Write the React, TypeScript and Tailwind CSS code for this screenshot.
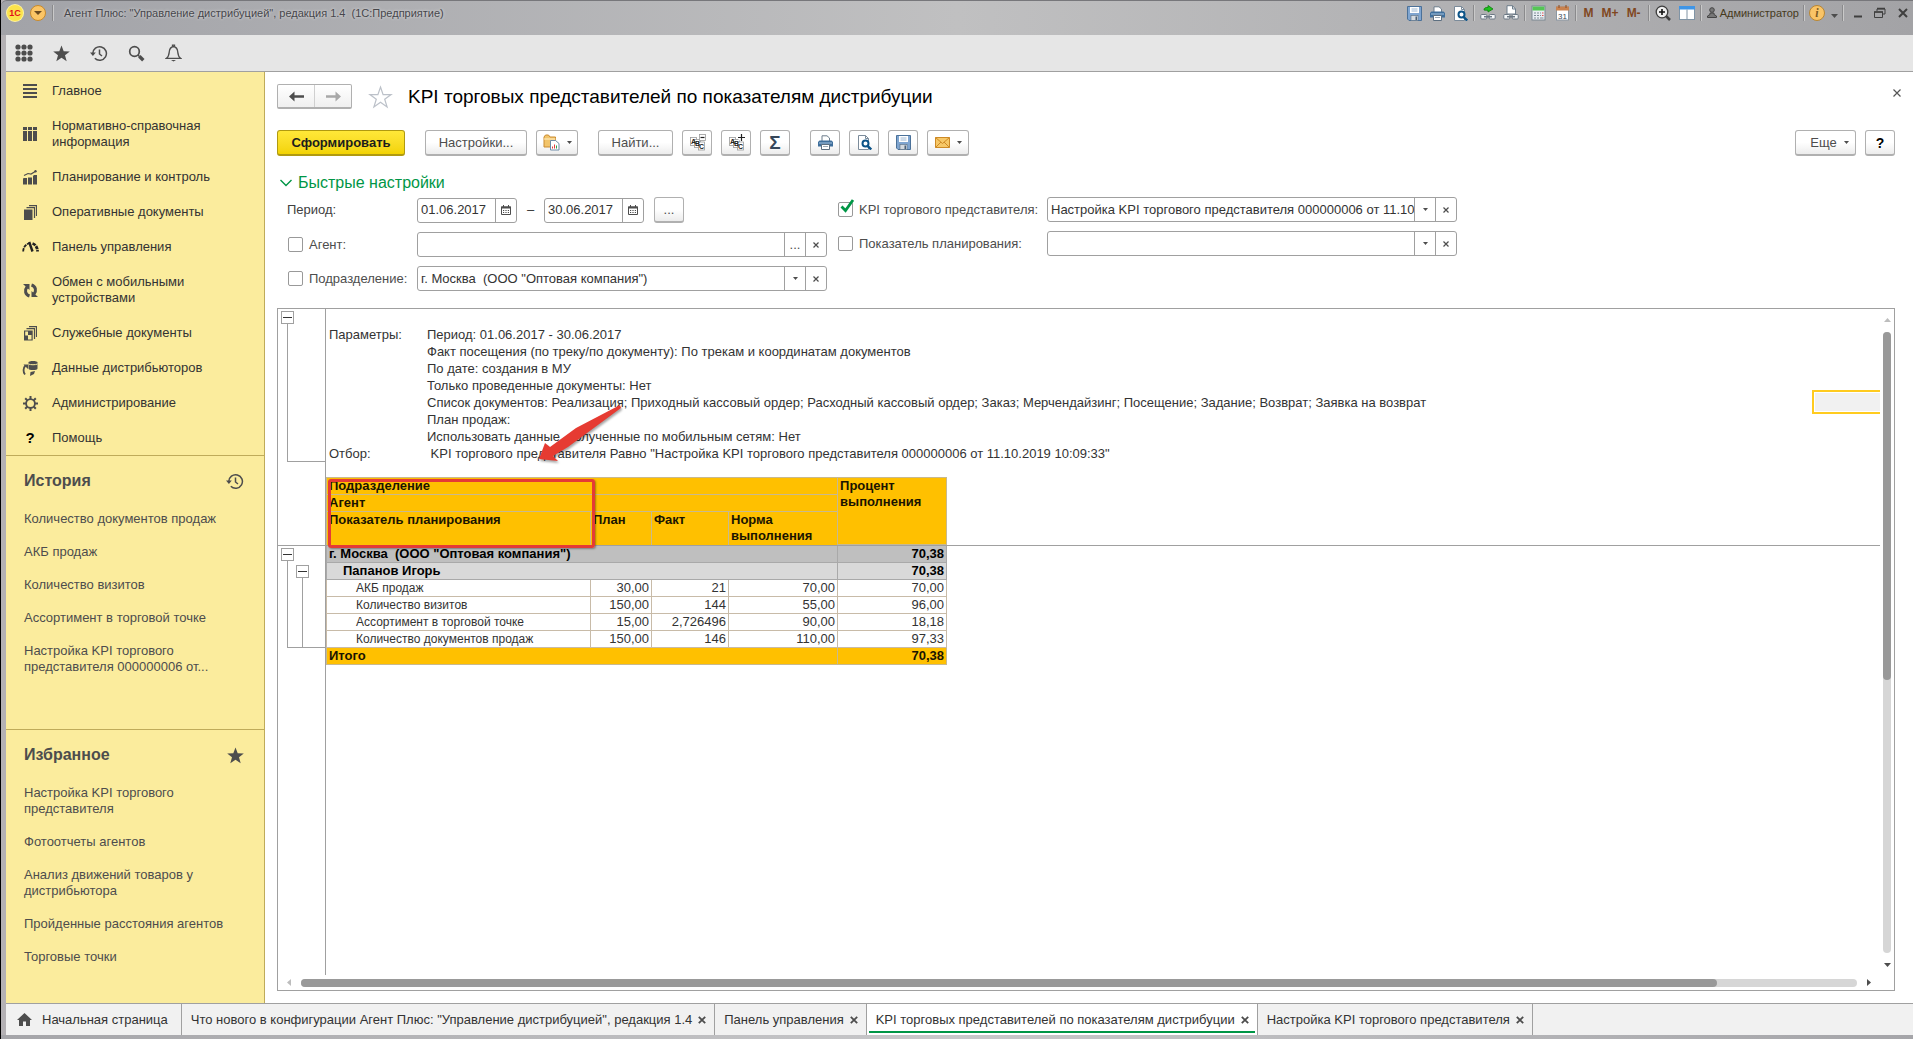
import { ReactNode } from "react";
import clsx from "clsx";

interface IconProps {
  className?: string;
}

const navItems = [
  { name: "Главное", icon: <LinesIcon /> },
  { name: "Нормативно-справочная информация", icon: <ColumnsIcon /> },
  { name: "Планирование и контроль", icon: <ChartIcon /> },
  { name: "Оперативные документы", icon: <DocsIcon /> },
  { name: "Панель управления", icon: <GaugeIcon /> },
  { name: "Обмен с мобильными устройствами", icon: <SyncIcon /> },
  { name: "Служебные документы", icon: <ServiceDocsIcon /> },
  { name: "Данные дистрибьюторов", icon: <DataIcon /> },
  { name: "Администрирование", icon: <GearIcon /> },
  { name: "Помощь", icon: <span className="text-[15px] font-bold text-black">?</span> },
];

const historyItems = [
  "Количество документов продаж",
  "АКБ продаж",
  "Количество визитов",
  "Ассортимент в торговой точке",
  "Настройка KPI торгового представителя 000000006 от...",
];

const favoriteItems = [
  "Настройка KPI торгового представителя",
  "Фотоотчеты агентов",
  "Анализ движений товаров у дистрибьютора",
  "Пройденные расстояния агентов",
  "Торговые точки",
];

const params = [
  ["Параметры:", "Период: 01.06.2017 - 30.06.2017"],
  ["", "Факт посещения (по треку/по документу): По трекам и координатам документов"],
  ["", "По дате: создания в МУ"],
  ["", "Только проведенные документы: Нет"],
  [
    "",
    "Список документов: Реализация; Приходный кассовый ордер; Расходный кассовый ордер; Заказ; Мерчендайзинг; Посещение; Задание; Возврат; Заявка на возврат",
  ],
  ["", "План продаж:"],
  ["", "Использовать данные, полученные по мобильным сетям: Нет"],
  [
    "Отбор:",
    ' KPI торгового представителя Равно "Настройка KPI торгового представителя 000000006 от 11.10.2019 10:09:33"',
  ],
];

const rows = [
  ["АКБ продаж", "30,00", "21", "70,00", "70,00"],
  ["Количество визитов", "150,00", "144", "55,00", "96,00"],
  ["Ассортимент в торговой точке", "15,00", "2,726496", "90,00", "18,18"],
  ["Количество документов продаж", "150,00", "146", "110,00", "97,33"],
];

const tabs = [
  { name: 'Что нового в конфигурации Агент Плюс: "Управление дистрибуцией", редакция 1.4' },
  { name: "Панель управления" },
  { name: "KPI торговых представителей по показателям дистрибуции", active: true },
  { name: "Настройка KPI торгового представителя" },
];

export default function App() {
  return (
    <div className="flex h-screen flex-col overflow-hidden border-l border-black bg-[#b4b1b4] font-['Liberation_Sans',Arial,sans-serif] text-[13px] leading-4 text-[#333]">
      <TitleBar />
      <div className="ml-[5px] flex min-h-0 flex-1 flex-col">
        <div className="flex h-[37px] shrink-0 items-center gap-5 border-b border-[#a0a0a0] bg-[#e6e6e6] pl-[9px] text-[#4d4d4d]">
          <button aria-label="Меню функций">
            <svg width="18" height="18" viewBox="0 0 18 18" fill="currentColor">
              {[3, 9, 15].map((y) =>
                [3, 9, 15].map((x) => <circle key={`${x}-${y}`} cx={x} cy={y} r="2.6" />)
              )}
            </svg>
          </button>
          <button aria-label="Избранное">
            <StarIcon className="h-[17px] w-[17px]" />
          </button>
          <button aria-label="История">
            <HistoryIcon />
          </button>
          <button aria-label="Поиск">
            <svg width="17" height="17" viewBox="0 0 17 17" fill="none" stroke="currentColor">
              <circle cx="6.5" cy="6.5" r="4.8" strokeWidth="1.7" />
              <path d="M10 10l1.5 1.5" strokeWidth="1.5" />
              <path d="M11.3 11.3l4 4" strokeWidth="3.4" />
            </svg>
          </button>
          <button aria-label="Оповещения">
            <svg width="17" height="18" viewBox="0 0 17 18" fill="none" stroke="currentColor" strokeWidth="1.3">
              <path d="M1.5 14.3C4 12.5 4 10.5 4.3 7.5C4.6 4.7 6 3 8.5 2.5C11 3 12.4 4.7 12.7 7.5C13 10.5 13 12.5 15.5 14.3Z" />
              <path d="M7.5 2.5V1.2h2v1.3" />
              <path d="M6 16h5l-2.5 1.5z" fill="currentColor" stroke="none" />
            </svg>
          </button>
        </div>
        <div className="flex min-h-0 flex-1">
          <Sidebar />
          <Main />
        </div>
        <TabBar />
      </div>
      <div className="h-1 shrink-0 bg-linear-to-r from-[#a5a5a9] via-[#c8c8ca] to-[#a5a5a9]" />
    </div>
  );
}

function TitleBar() {
  return (
    <header className="h-[35px] shrink-0 rounded-tl-md border-t border-[#77777b] bg-linear-to-r from-[#a2a3a8] via-[#c0c0c1] to-[#a3a3a6]">
      <div className="flex h-6 items-center pl-1.5">
        <span className="flex h-4 w-4 items-center justify-center rounded-full bg-[#fbe34b] text-[9px] font-bold text-[#e2101a] ring-1 ring-[#fff3a0]">
          1С
        </span>
        <button
          aria-label="Главное меню"
          className="ml-[7px] flex h-4 w-4 items-center justify-center rounded-full border border-[#c98a2b] bg-[#fbc566] text-[#6b4a20]"
        >
          <svg width="8" height="4" viewBox="0 0 8 4" fill="currentColor"><path d="M0 0h8L4 4z" /></svg>
        </button>
        <Separator className="ml-1.5" />
        <span className="ml-2.5 flex-1 text-[11px] whitespace-pre text-[#46464b] [text-shadow:0_0_3px_#e8e8e8]">
          {'Агент Плюс: "Управление дистрибуцией", редакция 1.4  (1С:Предприятие)'}
        </span>
        <div className="flex items-center gap-2">
          <TitleButton label="Сохранить"><SaveIcon /></TitleButton>
          <TitleButton label="Печать"><PrinterIcon /></TitleButton>
          <TitleButton label="Просмотр"><PreviewIcon /></TitleButton>
        </div>
        <Separator className="mx-[5px]" />
        <div className="flex items-center gap-[7px]">
          <TitleButton label="Получить ссылку">
            <svg width="16" height="16" viewBox="0 0 16 16" fill="none">
              <path d="M4 5c0-2 1-2.500 4-2.500V.500l5 3.500-5 3V5.300c-2 0-3 0-4-.3z" fill="#1fc31f" stroke="#0b7d0b" strokeWidth=".8" />
              <LinkShape />
            </svg>
          </TitleButton>
          <TitleButton label="Перейти по ссылке">
            <svg width="16" height="16" viewBox="0 0 16 16" fill="none">
              <path d="M4 9V.7h5.500L12.500 4v5z" fill="#fff" stroke="#6d7d8b" />
              <path d="M9.500.7V4h3" stroke="#6d7d8b" />
              <LinkShape />
            </svg>
          </TitleButton>
        </div>
        <Separator className="mx-[5px]" />
        <div className="flex items-center gap-2">
          <TitleButton label="Калькулятор">
            <svg width="16" height="16" viewBox="0 0 16 16">
              <rect x="1" y="1" width="13" height="14" fill="#e8eef2" stroke="#7a8792" />
              <rect x="1.5" y="1.5" width="12" height="4" fill="#55c555" />
              <path d="M3 8h2M6 8h2M9 8h1M3 10.500h2M6 10.500h2M9 10.500h1M3 13h2M6 13h2" stroke="#7e8b96" />
              <path d="M11 8h1.500M11 10.500h1.500" stroke="#e34b4b" />
              <path d="M9 13h3.500" stroke="#7e8b96" />
            </svg>
          </TitleButton>
          <TitleButton label="Календарь">
            <svg width="16" height="16" viewBox="0 0 16 16">
              <rect x="1.5" y="2" width="12" height="13" fill="#fff" stroke="#8b97a3" />
              <rect x="1" y="1.5" width="13" height="4" fill="#c9824f" />
              <path d="M4 0v3M11 0v3" stroke="#8a4b20" />
              <text x="7.5" y="13.5" fontSize="8" textAnchor="middle" fill="#3c4a57">31</text>
            </svg>
          </TitleButton>
        </div>
        <Separator className="mr-[5px] ml-1" />
        <div className="flex gap-2 px-0.5 text-[12px] font-bold text-[#80471f]">
          <button>M</button>
          <button>M+</button>
          <button>M-</button>
        </div>
        <Separator className="mx-[5px]" />
        <div className="flex items-center gap-2">
          <TitleButton label="Масштаб">
            <svg width="16" height="16" viewBox="0 0 16 16" fill="none" stroke="#3e3e3e">
              <circle cx="7" cy="7" r="5.8" fill="#efefef" strokeWidth="1.3" />
              <path d="M4 7h6M7 4v6" stroke="#111" strokeWidth="1.6" />
              <path d="M11 11l4 4" strokeWidth="2.5" />
            </svg>
          </TitleButton>
          <TitleButton label="Панели">
            <svg width="16" height="16" viewBox="0 0 16 16">
              <rect x=".5" y="1.5" width="15" height="13" fill="#fff" stroke="#8094a5" />
              <rect x="0" y="1" width="16" height="3.5" fill="#3f95e6" />
              <path d="M8 4.500v10" stroke="#8094a5" />
            </svg>
          </TitleButton>
        </div>
        <Separator className="mx-[5px]" />
        <button className="flex items-center gap-[3px] text-[11px] text-[#463a1c]">
          <svg width="10" height="12" viewBox="0 0 10 12" fill="#777" stroke="#444">
            <circle cx="5" cy="3" r="2.3" />
            <path d="M.5 10.500V9L3 7.500V6h4v1.500L9.500 9v1.500z" />
          </svg>
          Администратор
        </button>
        <Separator className="mx-1" />
        <button className="flex items-center gap-1.5" aria-label="О программе">
          <span className="flex h-4 w-4 items-center justify-center rounded-full border border-[#b98632] bg-[#f9c467] font-['Liberation_Serif',serif] text-[12px] font-bold italic text-[#7b5a24]">
            i
          </span>
          <span className="pt-1.5 text-[#4d4d4d]">
            <svg width="7" height="4" viewBox="0 0 7 4" fill="currentColor"><path d="M0 0h7L3.500 4z" /></svg>
          </span>
        </button>
        <Separator className="mx-1" />
        <div className="flex items-center gap-3 pr-[5px] pl-1.5 text-[#3f3f3f]">
          <TitleButton label="Свернуть">
            <svg width="8" height="12" viewBox="0 0 8 12"><path d="M0 9.500h8" stroke="currentColor" strokeWidth="2" /></svg>
          </TitleButton>
          <TitleButton label="Развернуть">
            <svg width="12" height="12" viewBox="0 0 12 12" fill="none" stroke="currentColor">
              <path d="M3 4V2h8v5H9" />
              <path d="M.500 5h8v5.500h-8z" />
              <path d="M0 5h9M3 1.500h8" strokeWidth="1.5" />
            </svg>
          </TitleButton>
          <TitleButton label="Закрыть">
            <svg width="10" height="10" viewBox="0 0 10 10"><path d="M1 1l8 8M9 1L1 9" stroke="currentColor" strokeWidth="2" /></svg>
          </TitleButton>
        </div>
      </div>
    </header>
  );
}

function TitleButton({ label, children }: { label: string; children: ReactNode }) {
  return <button aria-label={label}>{children}</button>;
}

function Separator({ className }: IconProps) {
  return <span className={clsx("box-content h-4 w-px border-r border-[#c9c9c9] bg-[#8a8a8c]", className)} />;
}

function Sidebar() {
  return (
    <aside className="flex w-[259px] shrink-0 flex-col border-r border-[#bfab5a] bg-[#fbec9d]">
      <nav className="pt-px">
        {navItems.map((d) => (
          <a key={d.name} href="#" className="flex items-center gap-[14px] pt-[10px] pr-12 pb-[9px] pl-4">
            <span className="flex h-4 w-4 shrink-0 items-center justify-center text-[#4d4d4d]">{d.icon}</span>
            {d.name}
          </a>
        ))}
      </nav>
      <SideSection title="История" icon={<HistoryIcon />} items={historyItems} />
      <SideSection title="Избранное" icon={<StarIcon className="h-[17px] w-[17px]" />} items={favoriteItems} />
    </aside>
  );
}

interface SectionProps {
  title: string;
  icon: ReactNode;
  items: string[];
}

function SideSection({ title, icon, items }: SectionProps) {
  return (
    <section className="flex-1 basis-0 border-t border-[#bfab5a] pr-5 pl-[18px] text-[#4d4d4d]">
      <div className="flex items-center justify-between pt-[15px]">
        <h2 className="text-[16px] leading-5 font-bold">{title}</h2>
        <span>{icon}</span>
      </div>
      <ul className="mt-5 flex flex-col gap-[17px] pr-5">
        {items.map((d) => (
          <li key={d}>
            <a href="#" className="block">{d}</a>
          </li>
        ))}
      </ul>
    </section>
  );
}

function Main() {
  return (
    <main className="flex min-w-0 flex-1 flex-col bg-white pr-[18px] pb-3 pl-3">
      <div className="flex items-center pt-3">
        <div className="flex h-[25px] overflow-hidden rounded-xs border border-b-2 border-[#b0b0b0] bg-linear-to-b from-white to-[#f0f0f0]">
          <button aria-label="Назад" className="flex w-9 items-center justify-center text-[#4d4d4d]">
            <ArrowIcon />
          </button>
          <button aria-label="Вперед" className="flex w-[37px] items-center justify-center border-l border-[#d0d0d0] text-[#a8a8a8]">
            <ArrowIcon className="rotate-180" />
          </button>
        </div>
        <button aria-label="В избранное" className="ml-4">
          <svg width="25" height="24" viewBox="0 0 25 24" fill="none" stroke="#bcc1c9" strokeWidth="1.2">
            <path d="M12.500 2l2.600 7.600h8l-6.400 4.700 2.400 7.700-6.600-4.700L5.900 22l2.400-7.700L1.900 9.600h8z" />
          </svg>
        </button>
        <h1 className="ml-[15px] flex-1 text-[19px] leading-6 text-black">
          KPI торговых представителей по показателям дистрибуции
        </h1>
        <button aria-label="Закрыть" className="-mr-1.5 mb-2">
          <svg width="8" height="8" viewBox="0 0 8 8"><path d="M.5.5l7 7M7.500.500l-7 7" stroke="#555" strokeWidth="1.2" /></svg>
        </button>
      </div>

      <div className="mt-[21px] flex gap-[9px]">
        <button className="mr-[11px] h-[26px] w-32 rounded-[3px] border border-b-2 border-[#b09a10] bg-linear-to-b from-[#ffe838] to-[#f3d300] font-bold text-[#1c1c1c]">
          Сформировать
        </button>
        <ToolButton className="w-[102px]">Настройки...</ToolButton>
        <ToolButton className="mr-[11px] w-[42px]" label="Варианты отчета">
          <svg width="17" height="17" viewBox="0 0 17 17">
            <path d="M1 3l1.500-2h3L7 3h5.500v10H1z" fill="#f2c46a" stroke="#c98b31" />
            <path d="M1 5h11.500" stroke="#fff0c8" />
            <path d="M7.500 6.500h5l3.500 3v6.500H7.500z" fill="#fff" stroke="#6e8ba8" />
            <path d="M9.500 14.500v-2M11.500 14.500v-4" stroke="#e23b3b" />
            <path d="M13.500 14.500v-3" stroke="#2f9f4d" />
          </svg>
          <Caret />
        </ToolButton>
        <ToolButton className="w-[75px]">Найти...</ToolButton>
        <ToolButton className="w-[30px]" label="Свернуть группы"><AbcIcon /></ToolButton>
        <ToolButton className="w-[30px]" label="Развернуть группы"><AbcIcon plus /></ToolButton>
        <ToolButton className="mr-[11px] w-[30px]" label="Сумма">
          <span className="text-[19px] font-bold text-[#36475a]">Σ</span>
        </ToolButton>
        <ToolButton className="w-[30px]" label="Печать"><PrinterIcon /></ToolButton>
        <ToolButton className="w-[30px]" label="Предварительный просмотр"><PreviewIcon /></ToolButton>
        <ToolButton className="w-[30px]" label="Сохранить"><SaveIcon /></ToolButton>
        <ToolButton className="w-[42px]" label="Отправить">
          <svg width="15" height="11" viewBox="0 0 15 11" fill="#f7c868" stroke="#cd8a26">
            <path d="M.500.500h14v10H.500z" />
            <path d="M.500.500l7 6 7-6M.500 10.500L6 5M14.500 10.500L9 5" fill="none" />
          </svg>
          <Caret />
        </ToolButton>
        <ToolButton className="ml-auto w-[61px] pl-2">
          Еще <Caret />
        </ToolButton>
        <ToolButton className="w-[30px] text-[14px] font-bold">
          <span className="text-black">?</span>
        </ToolButton>
      </div>

      <QuickSettings />
      <Report />
    </main>
  );
}

interface ToolProps {
  className?: string;
  label?: string;
  children: ReactNode;
}

function ToolButton({ className, label, children }: ToolProps) {
  return (
    <button
      aria-label={label}
      className={clsx(
        "flex h-[26px] items-center justify-center gap-[7px] rounded-[3px] border border-b-2 border-[#b0b0b0] bg-linear-to-b from-white via-white to-[#ececec] text-[#4d4d4d]",
        className
      )}
    >
      {children}
    </button>
  );
}

function QuickSettings() {
  return (
    <section className="pt-[17px]">
      <button className="flex items-center gap-1.5 pl-[3px] text-[16px] leading-5 text-[#009646]">
        <svg width="12" height="8" viewBox="0 0 12 8" fill="none" stroke="currentColor" strokeWidth="1.4">
          <path d="M.500 1L6 6.500 11.500 1" />
        </svg>
        Быстрые настройки
      </button>
      <div className="mt-1 flex gap-[11px]">
        <div className="flex w-[550px] flex-col gap-[9px]">
          <div className="flex h-[26px] items-center">
            <span className="w-[140px] pl-[10px] text-[#404040]">Период:</span>
            <DateField value="01.06.2017" label="Начало периода" />
            <span className="w-[27px] text-center">–</span>
            <DateField value="30.06.2017" label="Конец периода" />
            <ToolButton className="ml-[10px] w-[30px]" label="Выбрать период">...</ToolButton>
          </div>
          <div className="flex items-center">
            <Check id="agent" label="Агент:" className="w-[140px] pl-[11px]" />
            <Field id="agent" label="Агент" value="" choice="dots" />
          </div>
          <div className="flex items-center">
            <Check id="dept" label="Подразделение:" className="w-[140px] pl-[11px]" />
            <Field id="dept" label="Подразделение" value={'г. Москва  (ООО "Оптовая компания")'} choice="list" />
          </div>
        </div>
        <div className="flex w-[619px] flex-col gap-[9px]">
          <div className="flex items-center">
            <Check id="kpi" label="KPI торгового представителя:" checked className="w-[209px]" />
            <Field
              id="kpi"
              label="KPI торгового представителя"
              value="Настройка KPI торгового представителя 000000006 от 11.10.2019 10:09:33"
              choice="list"
            />
          </div>
          <div className="flex items-center">
            <Check id="plan" label="Показатель планирования:" className="w-[209px]" />
            <Field id="plan" label="Показатель планирования" value="" choice="list" />
          </div>
        </div>
      </div>
    </section>
  );
}

interface CheckProps {
  id: string;
  label: string;
  checked?: boolean;
  className?: string;
}

function Check({ id, label, checked, className }: CheckProps) {
  return (
    <label htmlFor={`${id}-on`} className={clsx("flex shrink-0 items-center gap-1.5 whitespace-nowrap text-[#4d4d4d]", className)}>
      <span className="relative flex">
        <input
          id={`${id}-on`}
          type="checkbox"
          defaultChecked={checked}
          className="peer h-[15px] w-[15px] appearance-none rounded-xs border border-[#999] bg-white"
        />
        <svg
          className="pointer-events-none absolute -top-1 left-0.5 hidden peer-checked:block"
          width="15"
          height="16"
          viewBox="0 0 15 16"
          fill="none"
          stroke="#009646"
          strokeWidth="2.8"
        >
          <path d="M1.500 8.500l4 4L13 2" />
        </svg>
      </span>
      {label}
    </label>
  );
}

interface FieldProps {
  id: string;
  label: string;
  value: string;
  choice: "dots" | "list";
}

function Field({ id, label, value, choice }: FieldProps) {
  return (
    <div className="flex h-[25px] min-w-0 flex-1 overflow-hidden rounded-[3px] border border-[#a0a0a0]">
      <input id={id} aria-label={label} defaultValue={value} className="min-w-0 flex-1 pl-[3px] outline-none" />
      <button aria-label="Выбрать" className="flex w-[21px] items-center justify-center border-l border-[#a0a0a0] text-[#4d4d4d]">
        {choice === "dots" ? "..." : <Caret />}
      </button>
      <button aria-label="Очистить" className="flex w-[21px] items-center justify-center border-l border-[#a0a0a0] text-[#4d4d4d]">
        <svg width="6" height="6" viewBox="0 0 6 6"><path d="M.500.500l5 5M5.500.500l-5 5" stroke="currentColor" strokeWidth="1.2" /></svg>
      </button>
    </div>
  );
}

function DateField({ value, label }: { value: string; label: string }) {
  return (
    <div className="flex h-[25px] w-[100px] overflow-hidden rounded-[3px] border border-[#a0a0a0]">
      <input aria-label={label} defaultValue={value} className="min-w-0 flex-1 pl-[3px] outline-none" />
      <button aria-label="Календарь" className="flex w-[21px] items-center justify-center border-l border-[#a0a0a0] text-[#4d4d4d]">
        <svg width="10" height="10" viewBox="0 0 10 10">
          <path d="M.500 2h9v7.500h-9z" fill="none" stroke="currentColor" />
          <path d="M0 2.500h10" stroke="currentColor" strokeWidth="2" />
          <path d="M2.500 0v2M7.500 0v2" stroke="currentColor" />
          <path d="M2 5.500h1.200M4.400 5.500h1.200M6.800 5.500H8M2 7.500h1.200M4.400 7.500h1.200M6.800 7.500H8" stroke="currentColor" />
        </svg>
      </button>
    </div>
  );
}

function Report() {
  return (
    <section className="mt-[17px] flex min-h-0 flex-1 flex-col border border-[#a0a0a0]">
      <div className="flex min-h-0 flex-1">
        <div className="relative flex min-w-0 flex-1 flex-col overflow-hidden">
          <div className="flex border-b border-[#a0a0a0]">
            <Gutter>
              <div className="flex h-[153px] pt-0.5 pl-[3px]">
                <GroupLine />
              </div>
            </Gutter>
            <div className="min-w-0 flex-1 pt-[17px]">
              <dl className="mb-[15px]">
                {params.map(([name, text]) => (
                  <div key={text} className="flex h-[17px] items-center whitespace-pre">
                    <dt className="w-[101px] shrink-0 pl-[3px]">{name}</dt>
                    <dd>{text}</dd>
                  </div>
                ))}
              </dl>
              <HeadTable />
            </div>
          </div>
          <div className="flex min-h-0 flex-1">
            <Gutter>
              <div className="flex h-[102px] pt-0.5 pl-[3px]">
                <GroupLine>
                  <div className="flex h-full pt-1 pl-2">
                    <GroupLine last />
                  </div>
                </GroupLine>
              </div>
            </Gutter>
            <div className="min-w-0 flex-1">
              <BodyTable />
            </div>
          </div>

          {/* current cell */}
          <div className="absolute top-[81px] right-0 h-6 w-[68px] border-2 border-r-0 border-[#ffcb1f] bg-[#f1f1f1] shadow-[inset_1px_1px_0_#fff,inset_0_-1px_0_#fff]" />
          {/* callout over the header */}
          <div className="absolute top-[170px] left-[50px] h-[69px] w-[267px] rounded-[3px] border-3 border-[#e53a35] shadow-[1px_1px_2px_rgba(0,0,0,0.35)]" />
          <svg
            className="absolute top-[94px] left-[258px] drop-shadow-[1px_2px_1px_rgba(0,0,0,0.35)]"
            width="88"
            height="62"
            viewBox="0 0 88 62"
          >
            <path d="M84 2L40 25 14 44 9 40 3 56 22 58 17 53 32 44 85 5z" fill="#e63b32" />
          </svg>
        </div>

        <div className="flex w-[14px] flex-col items-center gap-[10px] pt-[9px] pb-2">
          <svg width="7" height="4" viewBox="0 0 7 4" fill="#bdbdbd"><path d="M0 4L3.500 0 7 4z" /></svg>
          <div className="w-2 flex-1 rounded-full bg-[#d6d6d6]">
            <div className="h-[56%] rounded-full bg-[#999]" />
          </div>
          <svg width="7" height="4" viewBox="0 0 7 4" fill="#4d4d4d"><path d="M0 0L3.500 4 7 0z" /></svg>
        </div>
      </div>
      <div className="flex h-[15px] items-center gap-[10px] pr-[23px] pl-[9px]">
        <svg width="4" height="7" viewBox="0 0 4 7" fill="#bdbdbd"><path d="M4 0L0 3.500 4 7z" /></svg>
        <div className="h-2 flex-1 rounded-full bg-[#d6d6d6]">
          <div className="h-2 w-[91%] rounded-full bg-[#999]" />
        </div>
        <svg width="4" height="7" viewBox="0 0 4 7" fill="#4d4d4d"><path d="M0 0l4 3.500L0 7z" /></svg>
      </div>
    </section>
  );
}

function Gutter({ children }: { children: ReactNode }) {
  return <div className="w-12 shrink-0 border-r border-[#a0a0a0]">{children}</div>;
}

// nested groups share the bottom line of the outer one
function GroupLine({ last, children }: { last?: boolean; children?: ReactNode }) {
  return (
    <div className="flex flex-1 flex-col">
      <button
        aria-label="Свернуть"
        className="flex h-[13px] w-[13px] shrink-0 items-center justify-center border border-[#a0a0a0] bg-white"
      >
        <span className="h-px w-[9px] bg-[#333]" />
      </button>
      <div className={clsx("ml-1.5 flex-1 border-l border-[#a0a0a0]", !last && "border-b")}>{children}</div>
    </div>
  );
}

function Columns() {
  return (
    <colgroup>
      <col className="w-[264px]" />
      <col className="w-[61px]" />
      <col className="w-[77px]" />
      <col className="w-[109px]" />
      <col className="w-[109px]" />
    </colgroup>
  );
}

function HeadTable() {
  const cell = "border border-[#c8b98f] px-[2px] py-0 text-left align-top";
  return (
    <table className="w-[620px] table-fixed border-collapse bg-[#ffc000] text-[13px] font-bold text-[#1a1400]">
      <Columns />
      <thead>
        <tr className="h-[17px]">
          <th colSpan={4} className={cell}>Подразделение</th>
          <th rowSpan={3} className={cell}>Процент выполнения</th>
        </tr>
        <tr className="h-[17px]">
          <th colSpan={4} className={cell}>Агент</th>
        </tr>
        <tr className="h-[33px]">
          <th className={clsx(cell, "border-b-0")}>Показатель планирования</th>
          <th className={clsx(cell, "border-b-0")}>План</th>
          <th className={clsx(cell, "border-b-0")}>Факт</th>
          <th className={clsx(cell, "border-b-0")}>Норма выполнения</th>
        </tr>
      </thead>
    </table>
  );
}

function BodyTable() {
  const cell = "border border-[#c8bba8] px-[2px] py-0";
  const group = "border border-[#a9a9a9] px-[2px] py-0 whitespace-pre";
  return (
    <table className="w-[620px] table-fixed border-collapse text-[13px]">
      <Columns />
      <tbody>
        <tr className="h-4 bg-[#bfbfbf] font-bold text-black">
          <td colSpan={4} className={clsx(group, "border-t-0")}>{'г. Москва  (ООО "Оптовая компания")'}</td>
          <td className={clsx(group, "border-t-0 text-right")}>70,38</td>
        </tr>
        <tr className="h-[17px] bg-[#d9d9d9] font-bold text-black">
          <td colSpan={4} className="border border-[#a9a9a9] py-0 pr-[2px] pl-4">Папанов Игорь</td>
          <td className={clsx(group, "text-right")}>70,38</td>
        </tr>
        {rows.map(([name, ...values]) => (
          <tr key={name} className="h-[17px]">
            <td className="border border-[#c8bba8] py-0 pl-[29px] text-[12px] leading-4">{name}</td>
            {values.map((v, i) => (
              <td key={i} className={clsx(cell, "text-right")}>{v}</td>
            ))}
          </tr>
        ))}
        <tr className="h-[17px] bg-[#ffc000] font-bold text-[#1a1400]">
          <td colSpan={4} className="border border-[#c8b98f] px-[2px] py-0">Итого</td>
          <td className="border border-[#c8b98f] px-[2px] py-0 text-right">70,38</td>
        </tr>
      </tbody>
    </table>
  );
}

function TabBar() {
  return (
    <nav className="flex h-8 shrink-0 border-t border-[#a0a0a0] bg-[#f1f1f1]">
      <a href="#" className="flex items-center gap-[10px] border-r border-[#a0a0a0] pr-[13px] pl-[11px]">
        <svg width="15" height="13" viewBox="0 0 15 13" fill="#4d4d4d">
          <path d="M7.500 0L0 7h2v6h4V8.500h3V13h4V7h2z" />
        </svg>
        Начальная страница
      </a>
      {tabs.map((d) => (
        <div key={d.name} className={clsx("flex border-r border-[#a0a0a0] px-0.5", d.active && "bg-white")}>
          <div
            className={clsx(
              "mb-0.5 flex items-center gap-1.5 border-b-2 pt-1 pr-1.5 pl-[7px]",
              d.active ? "border-[#009646]" : "border-transparent"
            )}
          >
            <a href="#" className="whitespace-nowrap">{d.name}</a>
            <button aria-label="Закрыть вкладку">
              <svg width="8" height="8" viewBox="0 0 8 8"><path d="M.8.8l6.400 6.400M7.200.8L.8 7.200" stroke="#4d4d4d" strokeWidth="1.8" /></svg>
            </button>
          </div>
        </div>
      ))}
    </nav>
  );
}

function Caret() {
  return (
    <svg width="5" height="3" viewBox="0 0 5 3" fill="currentColor" className="shrink-0">
      <path d="M0 0h5L2.500 3z" />
    </svg>
  );
}

function ArrowIcon({ className }: IconProps) {
  return (
    <svg width="15" height="11" viewBox="0 0 15 11" className={className} fill="currentColor">
      <path d="M0 5.500L5.500.500v3.700H15v2.600H5.500v3.700z" />
    </svg>
  );
}

function StarIcon({ className }: IconProps) {
  return (
    <svg viewBox="0 0 17 17" className={className} fill="currentColor">
      <path d="M8.500.500l2.200 5.700 6.100.2-4.800 3.800 1.700 6.100-5.200-3.500-5.200 3.500L5 10.200.200 6.400l6.100-.2z" />
    </svg>
  );
}

function HistoryIcon() {
  return (
    <svg width="18" height="17" viewBox="0 0 18 17" fill="none" stroke="currentColor" strokeWidth="1.5">
      <path d="M2.800 8.500a6.800 6.800 0 1 1 2 4.800" />
      <path d="M0 7.500h5.800L2.900 11z" fill="currentColor" stroke="none" />
      <path d="M9.500 4.500v4.500l2.500 2" />
    </svg>
  );
}

function SaveIcon() {
  return (
    <svg width="15" height="15" viewBox="0 0 15 15">
      <path d="M.500.500h14v14H2L.500 13z" fill="#7fa5d0" stroke="#4b7199" />
      <rect x="3" y="1" width="9" height="6" fill="#fff" />
      <path d="M4.500 3h6M4.500 5h6" stroke="#9db7d2" />
      <rect x="4" y="9.5" width="7" height="5" fill="#d4dae0" stroke="#5d6f80" strokeWidth=".6" />
      <rect x="8.5" y="10.5" width="1.5" height="3.5" fill="#4b6076" />
    </svg>
  );
}

function PrinterIcon() {
  return (
    <svg width="15" height="15" viewBox="0 0 15 15">
      <path d="M4 6V.800h5L11.500 3v3" fill="#fff" stroke="#6d7d8b" />
      <path d="M1.500 5.500h12L15 7v4.500H0V7z" fill="#3f6f9c" />
      <path d="M1 8h13" stroke="#a9c6e0" />
      <path d="M3.500 9.500h8v5h-8z" fill="#fff" stroke="#5d6f80" />
      <path d="M5 11.500h5" stroke="#9aa9b6" />
    </svg>
  );
}

function PreviewIcon() {
  return (
    <svg width="15" height="15" viewBox="0 0 15 15" fill="none">
      <path d="M1.500.500h7l3 3v11h-10z" fill="#fff" stroke="#7b8b9a" />
      <path d="M8.500.500v3h3" stroke="#7b8b9a" />
      <circle cx="8.5" cy="8.5" r="3" fill="#fff" stroke="#0c5488" strokeWidth="2" />
      <path d="M10.500 10.800l3.700 3.700" stroke="#0c5488" strokeWidth="2.4" />
    </svg>
  );
}

function AbcIcon({ plus }: { plus?: boolean }) {
  return (
    <svg width="17" height="17" viewBox="0 0 17 17" fill="#fff" stroke="#9a9a9a" strokeWidth=".8">
      <rect x="1.5" y="3.5" width="6" height="8" />
      <rect x="5.5" y="5.5" width="6" height="8" />
      <rect x="9.5" y="8" width="6" height="8" />
      <g fill="#222" stroke="none" fontSize="7" fontWeight="bold">
        <text x="2" y="10">A</text>
        <text x="6" y="12">B</text>
        <text x="10" y="14.5">C</text>
      </g>
      <rect x="10.5" y=".5" width="6" height="6" stroke={plus ? "none" : "#9a9a9a"} />
      <path d={plus ? "M10 3.500h7M13.500 0v7" : "M11.500 3.500h4"} stroke="#222" strokeWidth="1.2" />
    </svg>
  );
}

function LinkShape() {
  return (
    <g stroke="#6c7884" fill="#f4f6f8">
      <rect x=".8" y="9.5" width="6" height="4.5" rx="1" />
      <rect x="9.2" y="9.5" width="6" height="4.5" rx="1" />
      <path d="M4 11.700h8" strokeWidth="1.5" />
    </g>
  );
}

function LinesIcon() {
  return (
    <svg width="14" height="14" viewBox="0 0 14 14">
      <path d="M0 1h14M0 5h14M0 9h14M0 13h14" stroke="currentColor" strokeWidth="2" />
    </svg>
  );
}

function ColumnsIcon() {
  return (
    <svg width="14" height="14" viewBox="0 0 14 14" fill="currentColor">
      <path d="M0 0h4v3H0zM5 0h4v3H5zM10 0h4v3h-4zM0 4h4v10H0zM5 4h4v10H5zM10 4h4v10h-4z" />
    </svg>
  );
}

function ChartIcon() {
  return (
    <svg width="14" height="15" viewBox="0 0 14 15" fill="currentColor">
      <path d="M0 8.500l1-.500h3v6.500H0zM5 7.500h4v7H5zM10 6l1-1h3v9.500h-4z" />
      <path d="M1 5.500l4-2 3 .5L13 1" fill="none" stroke="currentColor" strokeWidth="1.2" />
      <circle cx="12.5" cy="1.3" r="1.2" />
    </svg>
  );
}

function DocsIcon() {
  return (
    <svg width="13" height="15" viewBox="0 0 13 15" fill="currentColor">
      <path d="M0 4.500h8.500V15H0z" />
      <path d="M2.500 2.700h8V13M5 .700h7.500V11" fill="none" stroke="currentColor" strokeWidth="1.2" />
    </svg>
  );
}

function GaugeIcon() {
  return (
    <svg width="17" height="12" viewBox="0 0 17 12" fill="none" stroke="#222" className="shrink-0">
      <path d="M1.200 10.500C1.200 6.500 3.500 3 8 2.200" strokeWidth="1.8" strokeDasharray="3.5 .8" />
      <path d="M10.500 2.500c3 1 5 4 5 8" strokeWidth="2.8" strokeDasharray="3.5 .8" />
      <path d="M7.200 1l3.300 9.500" strokeWidth="2.4" />
    </svg>
  );
}

function SyncIcon() {
  return (
    <svg width="15" height="15" viewBox="0 0 15 15" fill="none" stroke="currentColor" strokeWidth="3">
      <path d="M6.500 13C2 11.500 1.500 7 4 4" />
      <path d="M8.500 2c4.500 1.500 5 6 2.500 9" />
      <path d="M0 1h6.500v6z" fill="currentColor" stroke="none" />
      <path d="M15 14H8.500V8z" fill="currentColor" stroke="none" />
    </svg>
  );
}

function ServiceDocsIcon() {
  return (
    <svg width="13" height="15" viewBox="0 0 13 15" fill="none" stroke="currentColor" strokeWidth="1.2">
      <path d="M.600 5h7.500v9H.600z" />
      <path d="M2.500 2.700h8V13M5 .700h7.500V11" />
      <path d="M4 5h4v4H4zM.600 9.500H4V14H.600z" fill="currentColor" stroke="none" />
    </svg>
  );
}

function DataIcon() {
  return (
    <svg width="16" height="15" viewBox="0 0 16 15" fill="currentColor" className="shrink-0">
      <path d="M6.500 1.500C6.500.500 8.500 0 11 0s4.500.500 4.500 1.500v6c0 1-2 1.500-4.500 1.500s-4.500-.500-4.500-1.500z" />
      <path d="M6.500 3c2 1 7 1 9 0" fill="none" stroke="#fbec9d" />
      <path d="M3 13.500C1 11 1 7 3.500 4.500" fill="none" stroke="currentColor" strokeWidth="1.8" />
      <path d="M1.500 3.500h4.500V8zM13 10l-1 3-4 2 .500-4z" />
    </svg>
  );
}

function GearIcon() {
  return (
    <svg width="15" height="15" viewBox="0 0 15 15" fill="none" stroke="currentColor">
      <circle cx="7.5" cy="7.5" r="4.4" strokeWidth="1.8" />
      <path
        d="M7.500 0v3M7.500 12v3M0 7.500h3M12 7.500h3M2.200 2.200l2 2M10.800 10.800l2 2M12.800 2.200l-2 2M4.200 10.800l-2 2"
        strokeWidth="2"
      />
    </svg>
  );
}
